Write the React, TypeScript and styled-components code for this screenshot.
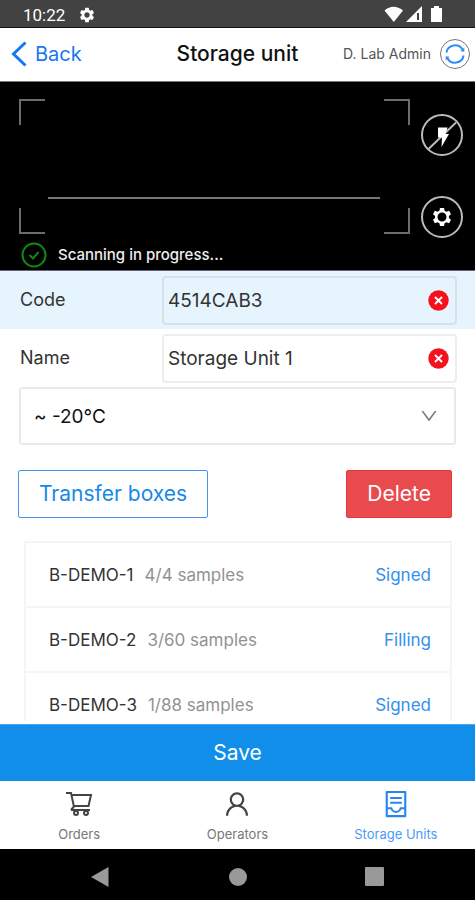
import React, { useState } from 'react';
import styled, { createGlobalStyle, css } from 'styled-components';
import { AiOutlineContainer, AiOutlineDown, AiOutlineUser } from 'react-icons/ai';
import { MdSettings } from 'react-icons/md';

const GlobalStyle = createGlobalStyle`
  *, *::before, *::after { box-sizing: border-box; }
  body { margin: 0; background: #fff; font-family: Inter, "Liberation Sans", sans-serif; }
  button, input, select { font-family: inherit; margin: 0; }
  h1, p, ul { margin: 0; padding: 0; }
`;

const Screen = styled.div`
  display: flex;
  flex-direction: column;
  height: 100vh;
  background: #fff;
  color: #333;
`;

const StatusBar = styled.div`
  display: flex;
  flex: none;
  align-items: center;
  gap: 13px;
  height: 28px;
  padding: 2px 31px 0 23px;
  border-bottom: 1px solid #111;
  background: #424242;
  color: #fff;
  font: 400 17px/24px Roboto, sans-serif;
`;

const StatusIcons = styled.div`
  display: flex;
  align-items: center;
  gap: 2px;
  margin-left: auto;
`;

const Header = styled.header`
  display: grid;
  flex: none;
  grid-template-columns: minmax(0, 1fr) auto minmax(0, 1fr);
  align-items: center;
  height: 54px;
  padding: 0 5px 2px;
  border-bottom: 1px solid #777;
`;

const BackLink = styled.a`
  display: flex;
  align-items: center;
  gap: 8px;
  padding-left: 6px;
  color: #1677f2;
  font-size: 20px;
  line-height: 28px;
  text-decoration: none;
`;

const Title = styled.h1`
  color: #111;
  font-size: 21px;
  font-weight: 500;
  line-height: 28px;
`;

const Account = styled.div`
  display: flex;
  align-items: center;
  justify-content: flex-end;
  gap: 9px;
  color: #555;
  font-size: 14px;
  line-height: 20px;
  white-space: nowrap;
`;

const SyncButton = styled.button`
  display: flex;
  flex: none;
  align-items: center;
  justify-content: center;
  width: 30px;
  height: 30px;
  padding: 0;
  border: 1px solid #777;
  border-radius: 50%;
  background: #fff;
`;

const Scanner = styled.section`
  display: grid;
  flex: none;
  grid-template-columns: 1fr auto;
  column-gap: 11px;
  padding: 17px 12px 1px 19px;
  border-bottom: 1px solid #667;
  background: #000;
`;

const Viewfinder = styled.div`
  display: flex;
  flex-direction: column;
  height: 135px;
`;

const CornerRow = styled.div`
  display: flex;
  justify-content: space-between;
`;

const Corner = styled.span<{ $v: 'top' | 'bottom'; $h: 'left' | 'right' }>`
  width: 26px;
  height: 26px;
  ${({ $v, $h }) => css`
    border-${$v}: 2px solid #6c6c6c;
    border-${$h}: 2px solid #6c6c6c;
  `}
`;

const ScanLine = styled.div`
  height: 2px;
  margin: auto 30px 9px 29px;
  background: #777;
`;

const ScannerTools = styled.div`
  display: flex;
  flex-direction: column;
  justify-content: space-between;
  height: 124px;
  margin-top: 15px;
`;

const RoundButton = styled.button`
  display: flex;
  align-items: center;
  justify-content: center;
  width: 42px;
  height: 42px;
  padding: 0;
  border: 2px solid #bbb;
  border-radius: 50%;
  background: #000;
  color: #fff;
`;

const ScanStatus = styled.p`
  display: flex;
  grid-column: 1 / -1;
  align-items: center;
  gap: 11px;
  height: 28px;
  margin-top: 3px;
  padding-left: 2px;
  color: #eee;
  font-size: 15px;
  font-weight: 500;
  line-height: 24px;
`;

const Content = styled.main`
  flex: 1;
  min-height: 0;
  margin-bottom: 3px;
  overflow-y: auto;
  scrollbar-width: none;
`;

const FieldRow = styled.div<{ $active?: boolean }>`
  display: grid;
  grid-template-columns: 142px minmax(0, 1fr);
  align-items: center;
  height: 58px;
  padding: 0 18px 0 20px;
  background: ${({ $active }) => ($active ? '#e6f4fd' : '#fff')};
`;

const Label = styled.label`
  font-size: 18px;
  line-height: 24px;
`;

const InputBox = styled.div`
  display: flex;
  align-items: center;
  height: 49px;
  padding: 0 6px 0 4px;
  border: 2px solid rgba(0, 0, 0, 0.07);
  border-radius: 4px;
`;

const TextInput = styled.input`
  flex: 1;
  min-width: 0;
  height: 100%;
  padding: 0;
  border: 0;
  outline: 0;
  background: transparent;
  color: #333;
  font-size: 19px;
`;

const ClearButton = styled.button`
  display: flex;
  padding: 0;
  border: 0;
  background: transparent;
`;

const SelectBox = styled.div`
  display: grid;
  align-items: center;
  margin: 0 19px;

  > * { grid-area: 1 / 1; }
  > svg {
    justify-self: end;
    margin-right: 17px;
    color: #777;
    pointer-events: none;
  }
`;

const Select = styled.select`
  width: 100%;
  height: 58px;
  padding: 0 44px 0 13px;
  border: 2px solid #e9e9e9;
  border-radius: 3px;
  appearance: none;
  background: #fff;
  color: #111;
  font-size: 19px;
`;

const Actions = styled.div`
  display: flex;
  justify-content: space-between;
  padding: 25px 23px 23px 18px;
`;

const ActionButton = styled.button<{ $danger?: boolean }>`
  height: 48px;
  padding: 0 20px;
  border: 1px solid ${({ $danger }) => ($danger ? '#e23a3c' : '#4595ee')};
  border-radius: 2px;
  background: ${({ $danger }) => ($danger ? '#e84a4d' : '#fff')};
  color: ${({ $danger }) => ($danger ? '#fff' : '#1888e6')};
  font-size: 21px;
  line-height: 28px;
`;

const BoxList = styled.ul`
  margin: 0 23px 0 24px;
  border: 2px solid #f5f5f5;
  list-style: none;
`;

const BoxItem = styled.li`
  display: flex;
  align-items: center;
  gap: 11px;
  height: 65px;
  padding: 0 19px 0 23px;
  border-bottom: 2px solid #f5f5f5;
  font-size: 17px;
  line-height: 24px;
`;

const Samples = styled.span`
  color: #929292;
`;

const State = styled.span`
  margin-left: auto;
  color: #3390f0;
`;

const SaveButton = styled.button`
  flex: none;
  height: 57px;
  border: 0;
  border-top: 1px solid #4aa5f3;
  background: #108ee9;
  color: #fff;
  font-size: 21px;
  line-height: 28px;
`;

const TabBar = styled.nav`
  display: grid;
  flex: none;
  grid-template-columns: repeat(3, 1fr);
  height: 68px;
`;

const Tab = styled.a<{ $active?: boolean }>`
  display: flex;
  flex-direction: column;
  align-items: center;
  gap: 7px;
  padding-top: 8px;
  color: ${({ $active }) => ($active ? '#2586ee' : '#444')};
  font-size: 13px;
  line-height: 16px;
  text-decoration: none;
`;

const TabLabel = styled.span<{ $active?: boolean }>`
  color: ${({ $active }) => ($active ? '#4a9bf5' : '#777')};
`;

const SystemBar = styled.div`
  display: flex;
  flex: none;
  align-items: center;
  justify-content: space-between;
  height: 51px;
  padding: 4px 90px 0;
  background: #000;
`;

const SystemButton = styled.button`
  display: flex;
  padding: 0;
  border: 0;
  background: transparent;
`;

function SignalIcons() {
  return (
    <StatusIcons>
      <svg width="20" height="17" viewBox="0 0 20 17" fill="#fff">
        <path d="M0.500 4.500Q9.500-3 19 4.500L9.800 16Z" />
      </svg>
      <svg width="17" height="17" viewBox="0 0 17 17">
        <path d="M16 0V16H0Z" fill="#fff" />
        <path d="M12 7v7" stroke="#424242" strokeWidth="2" />
      </svg>
      <svg width="19" height="17" viewBox="0 0 19 17" fill="#fff">
        <path d="M9 0h5v2h3v14H6V2h3z" />
      </svg>
    </StatusIcons>
  );
}

function SyncIcon() {
  return (
    <svg width="22" height="22" viewBox="0 0 22 22" fill="none" stroke="#2d8cf5" strokeWidth="2">
      <path d="M2.400 9.500A8.700 8.700 0 0 1 18.700 7M19.600 12.500A8.700 8.700 0 0 1 3.300 15" />
      <path d="M20.300 4.500V8.800L16.500 8.200ZM1.700 17.500V13.200L5.500 13.800Z" fill="#2d8cf5" stroke="none" />
    </svg>
  );
}

function FlashOffIcon() {
  return (
    <svg width="38" height="38" viewBox="0 0 38 38">
      <path d="M5.500 33L33 6.500" stroke="#bbb" strokeWidth="2" />
      <path d="M15 11.500h9.500l-2 6.500h3.500l-7.500 13 .5-9.500h-4z" fill="#fff" />
    </svg>
  );
}

function CartIcon() {
  return (
    <svg width="30" height="30" viewBox="0 0 30 30" fill="none" stroke="currentColor" strokeWidth="2">
      <path d="M2 4h5l3 14M8 6h19l-2.500 11H10M7 21h19M10 17.500L7 21" />
      <circle cx="12" cy="24" r="2" />
      <circle cx="22" cy="24" r="2" />
    </svg>
  );
}

function ClearIcon() {
  return (
    <svg width="21" height="21" viewBox="0 0 21 21">
      <circle cx="10.500" cy="10.500" r="10.200" fill="#f5101c" />
      <path d="M7 7l7 7M14 7l-7 7" stroke="#fff" strokeWidth="2" />
    </svg>
  );
}

const boxes = [
  { code: 'B-DEMO-1', samples: '4/4 samples', state: 'Signed' },
  { code: 'B-DEMO-2', samples: '3/60 samples', state: 'Filling' },
  { code: 'B-DEMO-3', samples: '1/88 samples', state: 'Signed' },
];

const tabs = [
  { label: 'Orders', icon: <CartIcon />, active: false },
  { label: 'Operators', icon: <AiOutlineUser size={30} />, active: false },
  { label: 'Storage Units', icon: <AiOutlineContainer size={30} />, active: true },
];

function Field({ id, label, initial, active }: { id: string; label: string; initial: string; active?: boolean }) {
  const [value, setValue] = useState(initial);
  return (
    <FieldRow $active={active}>
      <Label htmlFor={id}>{label}</Label>
      <InputBox>
        <TextInput id={id} value={value} onChange={(e) => setValue(e.target.value)} />
        <ClearButton type="button" aria-label={`Clear ${label}`} onClick={() => setValue('')}>
          <ClearIcon />
        </ClearButton>
      </InputBox>
    </FieldRow>
  );
}

export default function App() {
  return (
    <Screen>
      <GlobalStyle />
      <StatusBar>
        <span>10:22</span>
        <MdSettings size={18} />
        <SignalIcons />
      </StatusBar>
      <Header>
        <BackLink href="#back">
          <svg width="16" height="26" viewBox="0 0 16 26" fill="none" stroke="#1677f2" strokeWidth="3">
            <path d="M14.500 1.500L2.500 13L14.500 24.500" />
          </svg>
          Back
        </BackLink>
        <Title>Storage unit</Title>
        <Account>
          D. Lab Admin
          <SyncButton type="button" aria-label="Synchronise">
            <SyncIcon />
          </SyncButton>
        </Account>
      </Header>
      <Scanner>
        <Viewfinder>
          <CornerRow>
            <Corner $v="top" $h="left" />
            <Corner $v="top" $h="right" />
          </CornerRow>
          <ScanLine />
          <CornerRow>
            <Corner $v="bottom" $h="left" />
            <Corner $v="bottom" $h="right" />
          </CornerRow>
        </Viewfinder>
        <ScannerTools>
          <RoundButton type="button" aria-label="Flash off">
            <FlashOffIcon />
          </RoundButton>
          <RoundButton type="button" aria-label="Scanner settings">
            <svg width="20" height="20" viewBox="0 0 20 20">
              <path
                d="M8 1h4l.6 2.800 1.700 1 2.800-1 1.900 3.400-2.100 1.900v1.800l2.100 1.900-1.900 3.400-2.800-1-1.700 1L12 19H8l-.6-2.800-1.700-1-2.800 1L1 12.800l2.100-1.900V9.100L1 7.200l1.900-3.400 2.800 1 1.700-1zM10 5.500a4.500 4.500 0 1 0 0 9 4.500 4.500 0 0 0 0-9z"
                fill="#fff"
                fillRule="evenodd"
              />
            </svg>
          </RoundButton>
        </ScannerTools>
        <ScanStatus>
          <svg width="26" height="26" viewBox="0 0 26 26" fill="none" stroke="#0d8a12" strokeWidth="2">
            <circle cx="13" cy="13" r="11.500" />
            <path d="M8.500 13l3.500 3.500L17.500 10" />
          </svg>
          Scanning in progress...
        </ScanStatus>
      </Scanner>
      <Content>
        <Field id="code" label="Code" initial="4514CAB3" active />
        <Field id="name" label="Name" initial="Storage Unit 1" />
        <SelectBox>
          <Select aria-label="Temperature" defaultValue="-20">
            <option value="-20">~ -20°C</option>
          </Select>
          <AiOutlineDown size={20} />
        </SelectBox>
        <Actions>
          <ActionButton type="button">Transfer boxes</ActionButton>
          <ActionButton type="button" $danger>Delete</ActionButton>
        </Actions>
        <BoxList>
          {boxes.map((box) => (
            <BoxItem key={box.code}>
              <span>{box.code}</span>
              <Samples>{box.samples}</Samples>
              <State>{box.state}</State>
            </BoxItem>
          ))}
        </BoxList>
      </Content>
      <SaveButton type="button">Save</SaveButton>
      <TabBar>
        {tabs.map(({ label, icon, active }) => (
          <Tab key={label} href="#" $active={active} aria-current={active ? 'page' : undefined}>
            {icon}
            <TabLabel $active={active}>{label}</TabLabel>
          </Tab>
        ))}
      </TabBar>
      <SystemBar>
        <SystemButton type="button" aria-label="System back">
          <svg width="20" height="22" viewBox="0 0 20 22"><path d="M18.500 1v20L1 11z" fill="#999" /></svg>
        </SystemButton>
        <SystemButton type="button" aria-label="Home">
          <svg width="20" height="20" viewBox="0 0 20 20"><circle cx="10" cy="10" r="9" fill="#999" /></svg>
        </SystemButton>
        <SystemButton type="button" aria-label="Recent apps">
          <svg width="20" height="20" viewBox="0 0 20 20"><rect width="19" height="19" rx="1" fill="#999" /></svg>
        </SystemButton>
      </SystemBar>
    </Screen>
  );
}
